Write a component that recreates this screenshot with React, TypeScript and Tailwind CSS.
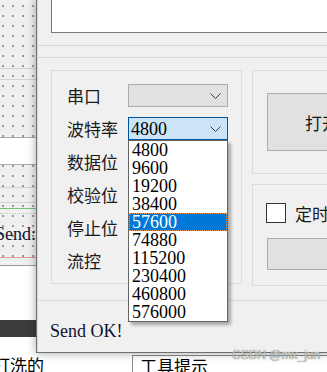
import React from 'react';

const rates = ['4800', '9600', '19200', '38400', '57600', '74880', '115200', '230400', '460800', '576000'];

function Chevron() {
  return (
    <svg width="11" height="6" viewBox="0 0 11 6" className="shrink-0">
      <polyline points="0.5,0.5 5.5,5.5 10.5,0.5" fill="none" stroke="#3c3c3c" strokeWidth="1" />
    </svg>
  );
}

const cjk = "font-['Noto_Sans_CJK_SC',sans-serif]";
const serif = "font-['Liberation_Serif','Noto_Sans_CJK_SC',serif]";

function Label({ children }: { children: React.ReactNode }) {
  return <div className={`w-[61px] shrink-0 text-[17px] leading-[17px] text-[#1a1a1a] ${cjk}`}>{children}</div>;
}

function LeftPanel() {
  return (
    <div className="flex h-[353px] w-[36px] shrink-0 flex-col overflow-hidden bg-[#f0f0f0] bg-[image:radial-gradient(circle,#9a9a9a_0.8px,transparent_1.2px)] bg-[length:10px_10px] bg-[position:-2px_1px]">
      <div className="h-[68px]" />
      <div className="h-px bg-[#d2d2d2]" />
      <div className="h-[10px]" />
      <div className="h-px bg-[#d2d2d2]" />
      <div className="h-[57px]" />
      <div className="h-px bg-[#a9a9a9]" />
      <div className="h-[26px] bg-white" />
      <div className="h-px bg-[#a9a9a9]" />
      <div className="h-[22px]" />
      <div className="h-px bg-[#d2d2d2]" />
      <div className="h-[14px]" />
      <div className="h-px bg-[#d2d2d2]" />
      <div className="h-[5px]" />
      <div className="h-px bg-[#72c472]" />
      <div className="h-[4px]" />
      <div className="h-px border-t border-dotted border-[#c4c4c4]" />
      <div className={`flex h-[43px] justify-end pt-[11px] text-[18px] leading-[18px] text-[#101030] ${serif}`}>
        <span className="whitespace-nowrap">Send:</span>
      </div>
      <div className="h-px bg-[#e59595]" />
      <div className="h-[7px]" />
      <div className="h-px bg-[#9a9a9a]" />
      <div className="h-[54px] bg-white" />
      <div className="h-[17px] bg-[#3b3b3b]" />
      <div className="h-[16px] bg-white" />
    </div>
  );
}

function BaudCombo() {
  return (
    <div className="relative h-[23px] w-[100px]">
      <div className="flex h-[23px] w-[100px] items-center justify-between border border-[#005499] bg-[#cce4f7] pl-[2px] pr-[6px]">
        <span className={`text-[18px] leading-[18px] text-black ${serif}`}>4800</span>
        <Chevron />
      </div>
      <div className="absolute left-0 top-[23px] z-20 w-[100px] border border-[#646464] bg-white shadow-[3px_3px_3px_rgba(0,0,0,0.3)]">
        {rates.map((r) => (
          <div
            key={r}
            className={
              r === '57600'
                ? `h-[18px] bg-[#0078d7] pl-[3px] text-[18px] leading-[18px] text-white outline-1 outline-dotted -outline-offset-1 outline-[#f59c52] ${serif}`
                : `h-[18px] pl-[3px] text-[18px] leading-[18px] text-black ${serif}`
            }
          >
            {r}
          </div>
        ))}
      </div>
    </div>
  );
}

function Window() {
  return (
    <div className="relative z-10 flex h-[353px] w-[420px] shrink-0 flex-col border-b border-l border-[#6f6f6f] bg-[#f0f0f0] shadow-[0_0_9px_rgba(0,0,0,0.35)]">
      <div className="flex flex-1 flex-col border-l border-[#dcdcdc]">
        {/* top frame with text box */}
        <div className="h-[46px] border-b border-[#d9d9d9] pl-[13px]">
          <div className="h-[33px] border-b border-l border-[#7a7a7a] bg-white" />
        </div>
        <div className="h-[11px]" />
        {/* settings frame */}
        <div className="flex h-[244px] gap-[10px] border-y border-[#d9d9d9] pl-[13px] pt-[12px]">
          <div className="flex h-[214px] w-[191px] shrink-0 flex-col gap-[10px] border border-[#dcdcdc] pl-[15px] pt-[13px]">
            <div className="flex h-[23px] items-center">
              <Label>串口</Label>
              <div className="flex h-[23px] w-[100px] items-center justify-end border border-[#adadad] bg-[#e1e1e1] pr-[6px]">
                <Chevron />
              </div>
            </div>
            <div className="flex h-[23px] items-center">
              <Label>波特率</Label>
              <BaudCombo />
            </div>
            <div className="flex h-[23px] items-center">
              <Label>数据位</Label>
            </div>
            <div className="flex h-[23px] items-center">
              <Label>校验位</Label>
            </div>
            <div className="flex h-[23px] items-center">
              <Label>停止位</Label>
            </div>
            <div className="flex h-[23px] items-center">
              <Label>流控</Label>
            </div>
          </div>
          <div className="flex flex-1 flex-col gap-[10px]">
            <div className="h-[104px] border border-[#dcdcdc] pl-[14px] pt-[22px]">
              <div className={`flex h-[58px] w-[150px] items-center border border-[#adadad] bg-[#e1e1e1] pl-[37px] text-[17px] leading-[17px] text-[#1a1a1a] ${cjk}`}>
                打开串口
              </div>
            </div>
            <div className="h-[102px] border border-[#dcdcdc] pt-[18px]">
              <div className="flex h-[20px] items-center gap-[9px] pl-[13px]">
                <div className="h-[20px] w-[20px] border border-[#333333] bg-white" />
                <span className={`text-[17px] leading-[17px] text-[#1a1a1a] ${cjk}`}>定时发送</span>
              </div>
              <div className="ml-[14px] mt-[15px] h-[32px] w-[150px] border border-[#adadad] bg-[#e1e1e1]" />
            </div>
          </div>
        </div>
        {/* status */}
        <div className={`flex-1 pl-[12px] pt-[21px] text-[18px] leading-[18px] text-[#101030] ${serif}`}>Send OK!</div>
      </div>
    </div>
  );
}

export default function App() {
  return (
    <div className="relative h-[372px] w-[327px] overflow-hidden bg-white">
      <div className="flex h-[353px]">
        <LeftPanel />
        <Window />
      </div>
      <div className={`flex h-[19px] bg-white text-[17px] leading-[17px] text-black ${cjk}`}>
        <div className="w-[132px] shrink-0 overflow-hidden pt-[3px]">
          <span className="ml-[-7px] block whitespace-nowrap">打洗的</span>
        </div>
        <div className="mt-[2px] flex-1 whitespace-nowrap border-l border-t border-[#8a8a8a] pl-[7px] pt-[1px]">工具提示</div>
      </div>
      <div className="absolute left-[232px] top-[349px] z-30 whitespace-nowrap font-['Liberation_Sans',sans-serif] text-[12px] leading-[12px] text-[#d0d0d0] [text-shadow:0_0_1px_#555]">
        CSDN @mx_jun
      </div>
    </div>
  );
}
